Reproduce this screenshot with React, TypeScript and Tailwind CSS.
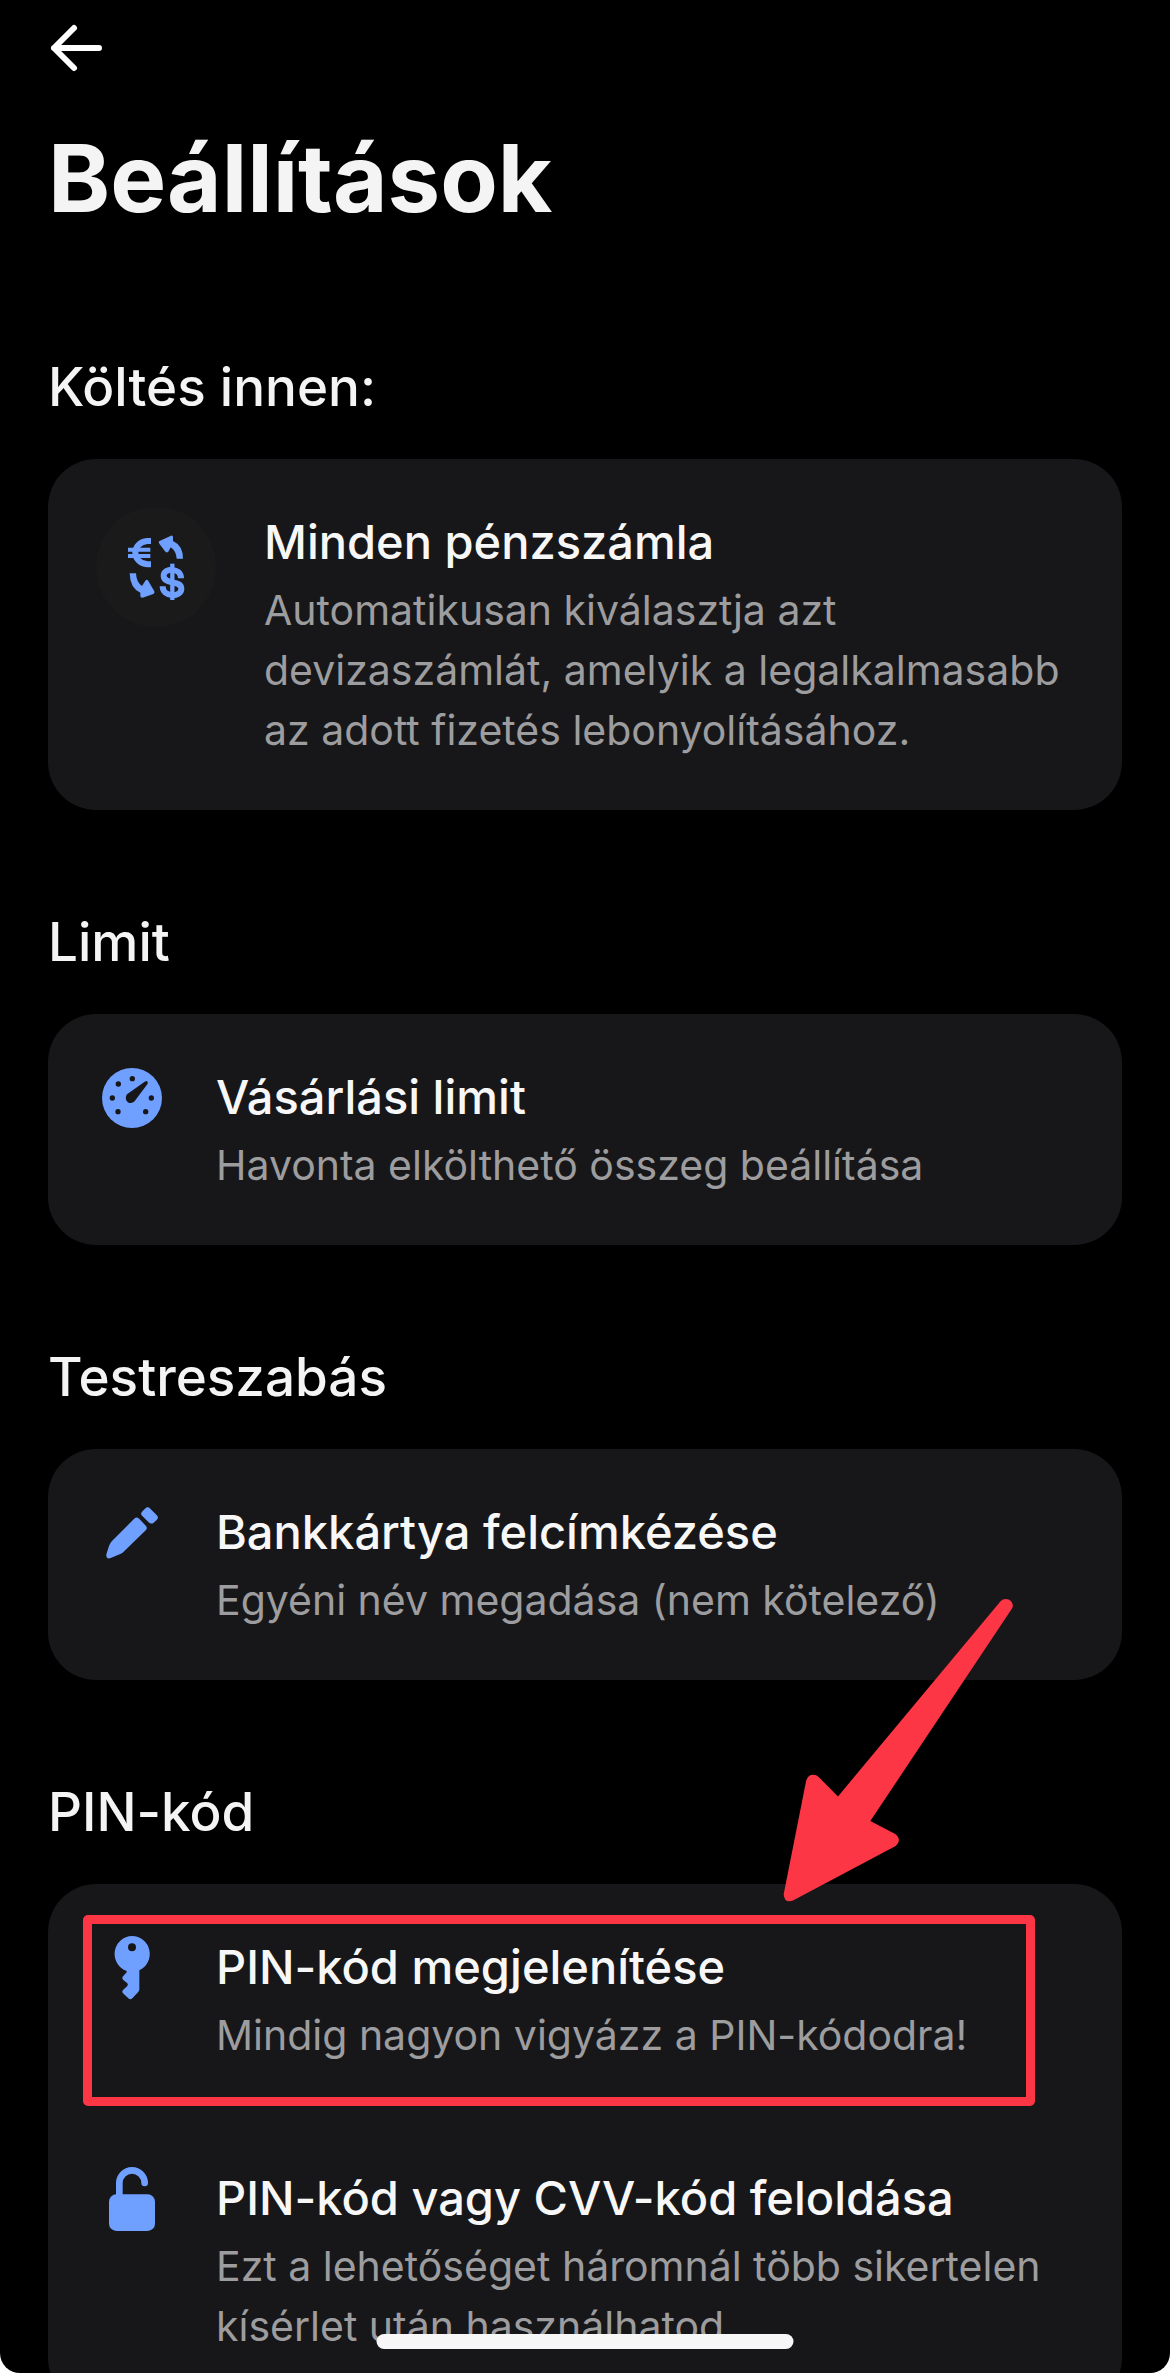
import type { ReactNode } from "react";

interface Item {
  icon: ReactNode;
  title: string;
  text: string;
  highlighted?: boolean;
}

interface Section {
  heading: string;
  items: Item[];
}

function BackIcon() {
  return (
    <svg width="54" height="54" viewBox="0 0 54 54" fill="none" stroke="#fff" strokeWidth="6" strokeLinecap="round" strokeLinejoin="round" aria-hidden="true">
      <path d="M51 27H6M26 7L6 27L26 47" />
    </svg>
  );
}

function ExchangeIcon() {
  return (
    <span className="flex size-[120px] items-center justify-center rounded-full bg-[#1a1a1a]">
      <svg width="60" height="66" viewBox="-3 -5 180 198" fill="none" aria-hidden="true">
        <g stroke="#6f9fff" strokeWidth="18">
          <path d="M72 16H61C13 21 13 81 61 86H72" />
          <path d="M3 42H70M3 61H70" strokeWidth="12" />
          <path d="M162 128C162 95 110 96 110 120C110 148 163 132 163 159C163 186 107 186 107 152" />
          <path d="M136 84V193" strokeWidth="13" />
        </g>
        <g fill="#6f9fff">
          <path d="M96 17L132 0Q138 -2 138 5V16Q168 30 168 69H149Q147 45 131 35L124 48Q118 53 114 47L97 24Q94 20 96 17Z" />
          <path d="M8 113H27Q28 140 45 151L55 135Q60 129 64 136L82 167Q84 172 79 175L47 186Q40 187 40 180V171Q9 158 8 113Z" />
        </g>
      </svg>
    </span>
  );
}

function GaugeIcon() {
  return (
    <svg width="72" height="72" viewBox="0 0 216 216" aria-hidden="true">
      <circle cx="108" cy="108" r="90" fill="#6f9fff" />
      <g fill="#171719">
        <circle cx="109" cy="50" r="8" />
        <circle cx="67" cy="66" r="8" />
        <circle cx="49" cy="108" r="8" />
        <circle cx="66" cy="149" r="8" />
        <circle cx="149" cy="149" r="8" />
        <circle cx="166" cy="108" r="8" />
        <path d="M93 97L146 59Q157 53 155 65L118 115C107 131 86 121 90 104Q91 100 93 97Z" />
      </g>
    </svg>
  );
}

function PencilIcon() {
  return (
    <svg width="72" height="72" viewBox="0 -13 216 216" fill="#6f9fff" aria-hidden="true">
      <path d="M138 31L147 22Q155 14 163 22L181 40Q190 48 182 56L173 64Q165 70 157 62L139 44Q132 38 138 31Z" />
      <path d="M116 51Q122 46 128 51L150 74Q155 80 150 86L83 151Q78 156 71 159L44 170Q30 175 31 159L39 134Q42 125 48 119Z" />
    </svg>
  );
}

function KeyIcon() {
  return (
    <svg width="72" height="72" viewBox="0 0 216 216" fill="#6f9fff" aria-hidden="true">
      <path
        fillRule="evenodd"
        d="M108 12A54 54 0 0 1 130 115V172Q130 177 126 181L109 199Q103 205 97 199L81 184Q76 179 81 174L94 162Q97 158 94 154L81 143Q76 138 81 133L92 121V117A54 54 0 0 1 108 12ZM108 34A12 12 0 1 0 108 58A12 12 0 1 0 108 34Z"
      />
    </svg>
  );
}

function UnlockIcon() {
  return (
    <svg width="72" height="72" viewBox="0 0 216 216" fill="none" aria-hidden="true">
      <rect x="39" y="94" width="138" height="110" rx="22" fill="#6f9fff" />
      <path d="M70 104V60A38 38 0 0 1 146 60" stroke="#6f9fff" strokeWidth="20" strokeLinecap="round" />
    </svg>
  );
}

function Pointer() {
  return (
    <svg
      className="absolute top-[-286px] right-[109px]"
      width="230"
      height="304"
      viewBox="130 108 690 852"
      preserveAspectRatio="none"
      fill="#fc3645"
      aria-hidden="true"
    >
      <path d="M782 118C790 109 806 109 814 117Q824 127 816 139L392 733L468 770Q488 786 468 803L160 956Q134 964 132 938L199 622Q206 597 233 606L295 664Z" />
    </svg>
  );
}

const sections: Section[] = [
  {
    heading: "Költés innen:",
    items: [
      {
        icon: <ExchangeIcon />,
        title: "Minden pénzszámla",
        text: "Automatikusan kiválasztja azt devizaszámlát, amelyik a legalkalmasabb az adott fizetés lebonyolításához.",
      },
    ],
  },
  {
    heading: "Limit",
    items: [{ icon: <GaugeIcon />, title: "Vásárlási limit", text: "Havonta elkölthető összeg beállítása" }],
  },
  {
    heading: "Testreszabás",
    items: [{ icon: <PencilIcon />, title: "Bankkártya felcímkézése", text: "Egyéni név megadása (nem kötelező)" }],
  },
  {
    heading: "PIN-kód",
    items: [
      {
        icon: <KeyIcon />,
        title: "PIN-kód megjelenítése",
        text: "Mindig nagyon vigyázz a PIN-kódodra!",
        highlighted: true,
      },
      {
        icon: <UnlockIcon />,
        title: "PIN-kód vagy CVV-kód feloldása",
        text: "Ezt a lehetőséget háromnál több sikertelen kísérlet után használhatod.",
      },
    ],
  },
];

function SettingsRow({ icon, title, text, highlighted }: Item) {
  return (
    <li className="relative">
      <button type="button" className="flex w-full items-start gap-12 px-12 pt-12 pb-[50px] text-left">
        <span className="shrink-0">{icon}</span>
        <span className="flex min-w-0 flex-1 flex-col gap-1">
          <span className="text-[47px] leading-[69px] font-medium text-[#f7f7f7]">{title}</span>
          <span className="text-[41px] leading-[60px] text-[#9d9d9f]">{text}</span>
        </span>
      </button>
      {highlighted && (
        <>
          <span className="pointer-events-none absolute top-[31px] right-[87px] bottom-[9px] left-[35px] rounded-[5px] border-[9px] border-[#fc3645]" />
          <Pointer />
        </>
      )}
    </li>
  );
}

export default function App() {
  return (
    <div className="bg-white">
      <div className="relative h-screen overflow-hidden rounded-b-[20px] bg-black font-['Inter',sans-serif] text-[#f4f4f4]">
        <header className="flex h-24 items-center px-12">
          <button type="button" aria-label="Vissza">
            <BackIcon />
          </button>
        </header>

        <main className="px-12">
          <h1 className="mt-[22px] mb-[113px] text-[94px] leading-[120px] font-bold">Beállítások</h1>

          <div className="flex flex-col gap-24">
            {sections.map((section) => (
              <section key={section.heading}>
                <h2 className="mb-9 text-[53px] leading-[72px] font-medium">{section.heading}</h2>
                <ul className="rounded-[48px] bg-[#171719]">
                  {section.items.map((item) => (
                    <SettingsRow key={item.title} {...item} />
                  ))}
                </ul>
              </section>
            ))}
          </div>
        </main>

        {/* home indicator */}
        <div className="absolute bottom-6 left-1/2 h-[15px] w-[417px] -translate-x-1/2 rounded-full bg-[#f7f7f7]" />
      </div>
    </div>
  );
}
